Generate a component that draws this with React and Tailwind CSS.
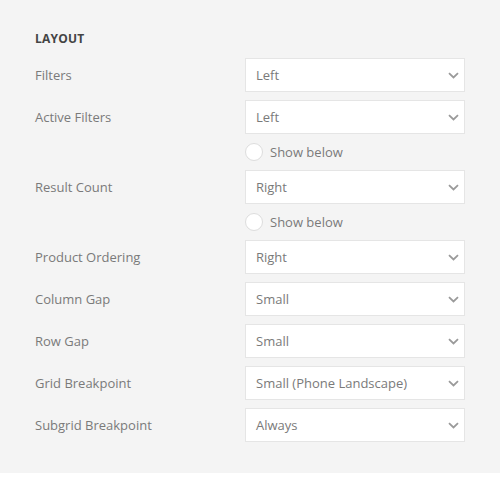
import React from "react";

const rows = [
  { label: "Filters", value: "Left" },
  { label: "Active Filters", value: "Left", radio: "Show below" },
  { label: "Result Count", value: "Right", radio: "Show below" },
  { label: "Product Ordering", value: "Right" },
  { label: "Column Gap", value: "Small" },
  { label: "Row Gap", value: "Small" },
  { label: "Grid Breakpoint", value: "Small (Phone Landscape)" },
  { label: "Subgrid Breakpoint", value: "Always" },
];

const Chevron = () => (
  <svg width="11" height="7" viewBox="0 0 11 7" fill="none">
    <path d="M1 1.2 L5.5 5.5 L10 1.2" stroke="#9a9a9a" strokeWidth="1.8" />
  </svg>
);

const Select = ({ value }) => (
  <div className="flex h-[34px] w-[220px] items-center justify-between border border-[#e5e5e5] bg-white pl-[10px] pr-[5px] text-[13px] text-[#7a7a7a]">
    <span className="pt-[2px]">{value}</span>
    <Chevron />
  </div>
);

const App = () => {
  return (
    <div
      className="h-[473px] w-[500px] bg-[#f4f4f4] px-[35px] pt-[31px]"
      style={{ fontFamily: '"Open Sans", sans-serif' }}
    >
      <h2 className="mb-[11px] text-[12px] font-bold leading-[16px] tracking-[0.2px] text-[#444]">
        LAYOUT
      </h2>
      <div className="flex flex-col gap-[8px]">
        {rows.map((row) => (
          <React.Fragment key={row.label}>
            <div className="flex items-center justify-between">
              <span className="pt-[2px] text-[13px] text-[#7a7a7a]">{row.label}</span>
              <Select value={row.value} />
            </div>
            {row.radio && (
              <div className="flex h-[20px] items-center pl-[210px]">
                <span className="h-[18px] w-[18px] rounded-full border border-[#ddd] bg-white" />
                <span className="ml-[7px] pt-[2px] text-[13px] text-[#7a7a7a]">{row.radio}</span>
              </div>
            )}
          </React.Fragment>
        ))}
      </div>
    </div>
  );
};

export default App;
